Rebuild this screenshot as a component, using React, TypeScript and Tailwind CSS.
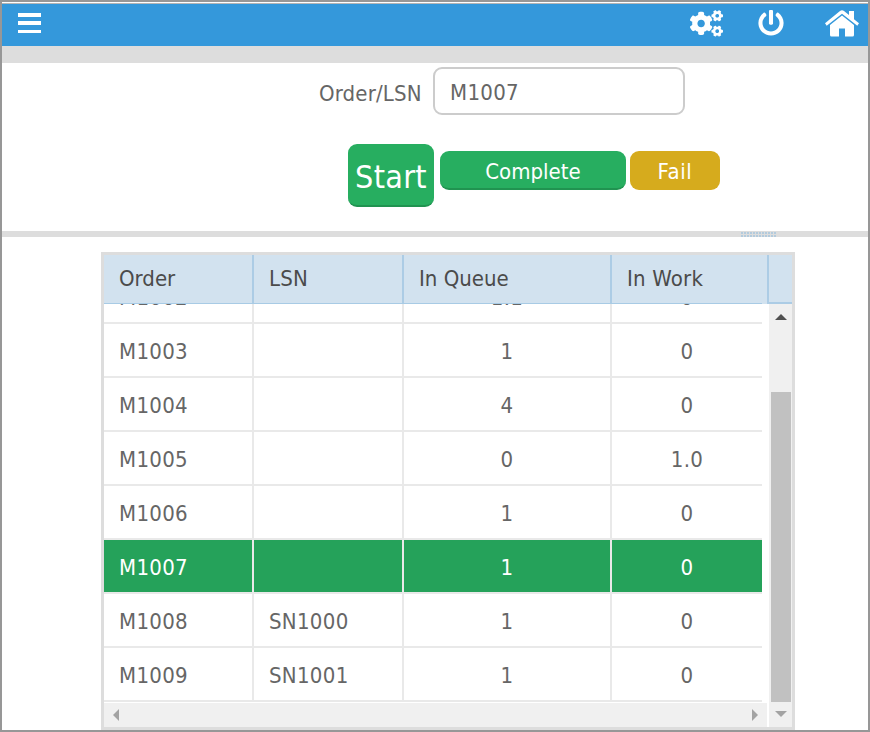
import React from "react";
import { FaCogs, FaPowerOff } from "react-icons/fa";

const FONT = "font-['DejaVu_Sans_Condensed','DejaVu_Sans','Noto_Sans',sans-serif] [font-stretch:75%]";

const rows = [
  { order: "M1002", lsn: "", queue: "1.1", work: "0" },
  { order: "M1003", lsn: "", queue: "1", work: "0" },
  { order: "M1004", lsn: "", queue: "4", work: "0" },
  { order: "M1005", lsn: "", queue: "0", work: "1.0" },
  { order: "M1006", lsn: "", queue: "1", work: "0" },
  { order: "M1007", lsn: "", queue: "1", work: "0", selected: true },
  { order: "M1008", lsn: "SN1000", queue: "1", work: "0" },
  { order: "M1009", lsn: "SN1001", queue: "1", work: "0" },
];

function Home() {
  return (
    <svg width="34" height="27" viewBox="0 0 34 27" fill="white">
      <path d="M0 13.3L15 1Q17 -.5 19 1L24 5V1H29V9.2L34 13.3L32.3 15.8L17 3.8L1.7 15.8Z" />
      <path d="M5 15L17 5.5L29 15V25Q29 26.5 27.5 26.5H20V18.5H14V26.5H6.5Q5 26.5 5 25Z" />
    </svg>
  );
}

function Cols({ children, className = "" }: { children: React.ReactNode; className?: string }) {
  return <div className={`grid grid-cols-[150px_150px_208px_150px] ${className}`}>{children}</div>;
}

function Row({ row }: { row: (typeof rows)[number] }) {
  const cell = "flex items-center border-r-2 border-[#e9e9e9] pl-[15px] pt-[3px]";
  return (
    <Cols
      className={`h-[54px] shrink-0 border-b-2 border-[#e9e9e9] text-[22px] leading-[49px] tracking-[0.3px] ${
        row.selected ? "bg-[#25a25a] text-white" : "text-[#666]"
      }`}
    >
      <div className={cell}>{row.order}</div>
      <div className={cell}>{row.lsn}</div>
      <div className="flex items-center justify-center border-r-2 border-[#e9e9e9] pt-[3px]">{row.queue}</div>
      <div className="flex items-center justify-center pt-[3px]">{row.work}</div>
    </Cols>
  );
}

export default function App() {
  return (
    <div className={`flex h-[732px] w-[870px] flex-col overflow-hidden border-2 border-[#979797] bg-white ${FONT}`}>
      <div className="mt-px h-px shrink-0 bg-[#b5b5b5]" />
      <header className="flex h-[42px] shrink-0 items-start justify-between bg-[#3498db] pl-4 pr-[9px]">
        <div className="flex w-[23px] flex-col gap-1 pt-[9px]">
          <div className="h-1 bg-white" />
          <div className="h-1 bg-white" />
          <div className="mt-px h-[3px] bg-white" />
        </div>
        <div className="flex pt-[6px] text-white">
          <FaCogs className="h-[27px] w-[33px]" />
          <FaPowerOff className="ml-[35px] h-[26px] w-[26px]" />
          <div className="ml-[41px]">
            <Home />
          </div>
        </div>
      </header>
      <div className="h-[17px] shrink-0 bg-[#ddd]" />

      <section className="h-[168px] shrink-0">
        <div className="flex items-center pl-[317px] pt-1">
          <label className="w-[114px] pt-1 text-[22px] tracking-[0.15px] whitespace-nowrap text-[#666]">Order/LSN</label>
          <div className="flex h-12 w-[252px] items-center rounded-[9px] border-2 border-[#ccc] pl-[15px] pt-[2px] text-[22px] tracking-[0.3px] text-[#666]">
            M1007
          </div>
        </div>
        <div className="flex pl-[346px] pt-[29px] text-white">
          <button className="flex h-[63px] w-[86px] items-center justify-center rounded-[9px] border-b-2 border-[#209350] bg-[#27ae60] pt-1 text-[32px] tracking-[0.3px]">
            Start
          </button>
          <button className="ml-[6px] mt-[7px] flex h-[39px] w-[186px] items-center justify-center rounded-[9px] border-b-2 border-[#209350] bg-[#27ae60] pt-1 text-[22px]">
            Complete
          </button>
          <button className="ml-1 mt-[7px] flex h-[39px] w-[90px] items-center justify-center rounded-[9px] bg-[#d6ab1d] pt-[2px] text-[22px] tracking-[0.6px]">
            Fail
          </button>
        </div>
      </section>

      <div className="flex h-[6px] shrink-0 items-center bg-[#ddd] pl-[739px]">
        <div className="h-[5px] w-[35px] bg-[repeating-linear-gradient(90deg,transparent_0_2px,#ddd_2px_3px),linear-gradient(#b3cbdd_0_2px,#ddd_2px_3px,#b3cbdd_3px)]" />
      </div>

      <div className="ml-[99px] mt-[15px] flex h-[478px] w-[694px] shrink-0 flex-col border-[3px] border-[#ddd]">
        <div className="flex h-[49px] shrink-0 bg-[#d2e2ef] text-[22px] text-[#4b4b4b]">
          <div className="grid w-[658px] grid-cols-[150px_150px_208px_150px] border-b border-[#a8cbe5] leading-[48px]">
            <div className="border-r-2 border-[#accce5] pl-[15px]">Order</div>
            <div className="border-r-2 border-[#accce5] pl-[15px] tracking-[0.2px]">LSN</div>
            <div className="border-r-2 border-[#accce5] pl-[15px]">In Queue</div>
            <div className="pl-[15px] tracking-[0.2px]">In Work</div>
          </div>
          <div className="w-[5px]" />
          <div className="w-[25px] border-b-2 border-l-2 border-[#accce5]" />
        </div>
        <div className="flex h-[423px] shrink-0">
          <div className="flex w-[663px] flex-col">
            <div className="flex h-[399px] w-[658px] flex-col justify-end overflow-hidden pb-px">
              {rows.map((r) => (
                <Row key={r.order} row={r} />
              ))}
            </div>
            <div className="flex h-6 items-center justify-between bg-[#f0f0f0] pl-[9px] pr-[9px]">
              <svg width="6" height="12" fill="#a3a3a3"><path d="M6 0V12L0 6Z" /></svg>
              <svg width="6" height="12" fill="#a3a3a3"><path d="M0 0V12L6 6Z" /></svg>
            </div>
          </div>
          <div className="ml-[2px] flex w-[23px] flex-col items-center bg-[#f0f0f0]">
            <svg width="12" height="6" className="mt-[10px] shrink-0" fill="#505050"><path d="M0 6L6 0L12 6Z" /></svg>
            <div className="ml-px mt-[72px] h-[310px] w-5 shrink-0 bg-[#c1c1c1]" />
            <svg width="12" height="6" className="mt-[9px] shrink-0" fill="#a3a3a3"><path d="M0 0L6 6L12 0Z" /></svg>
          </div>
        </div>
      </div>
    </div>
  );
}
